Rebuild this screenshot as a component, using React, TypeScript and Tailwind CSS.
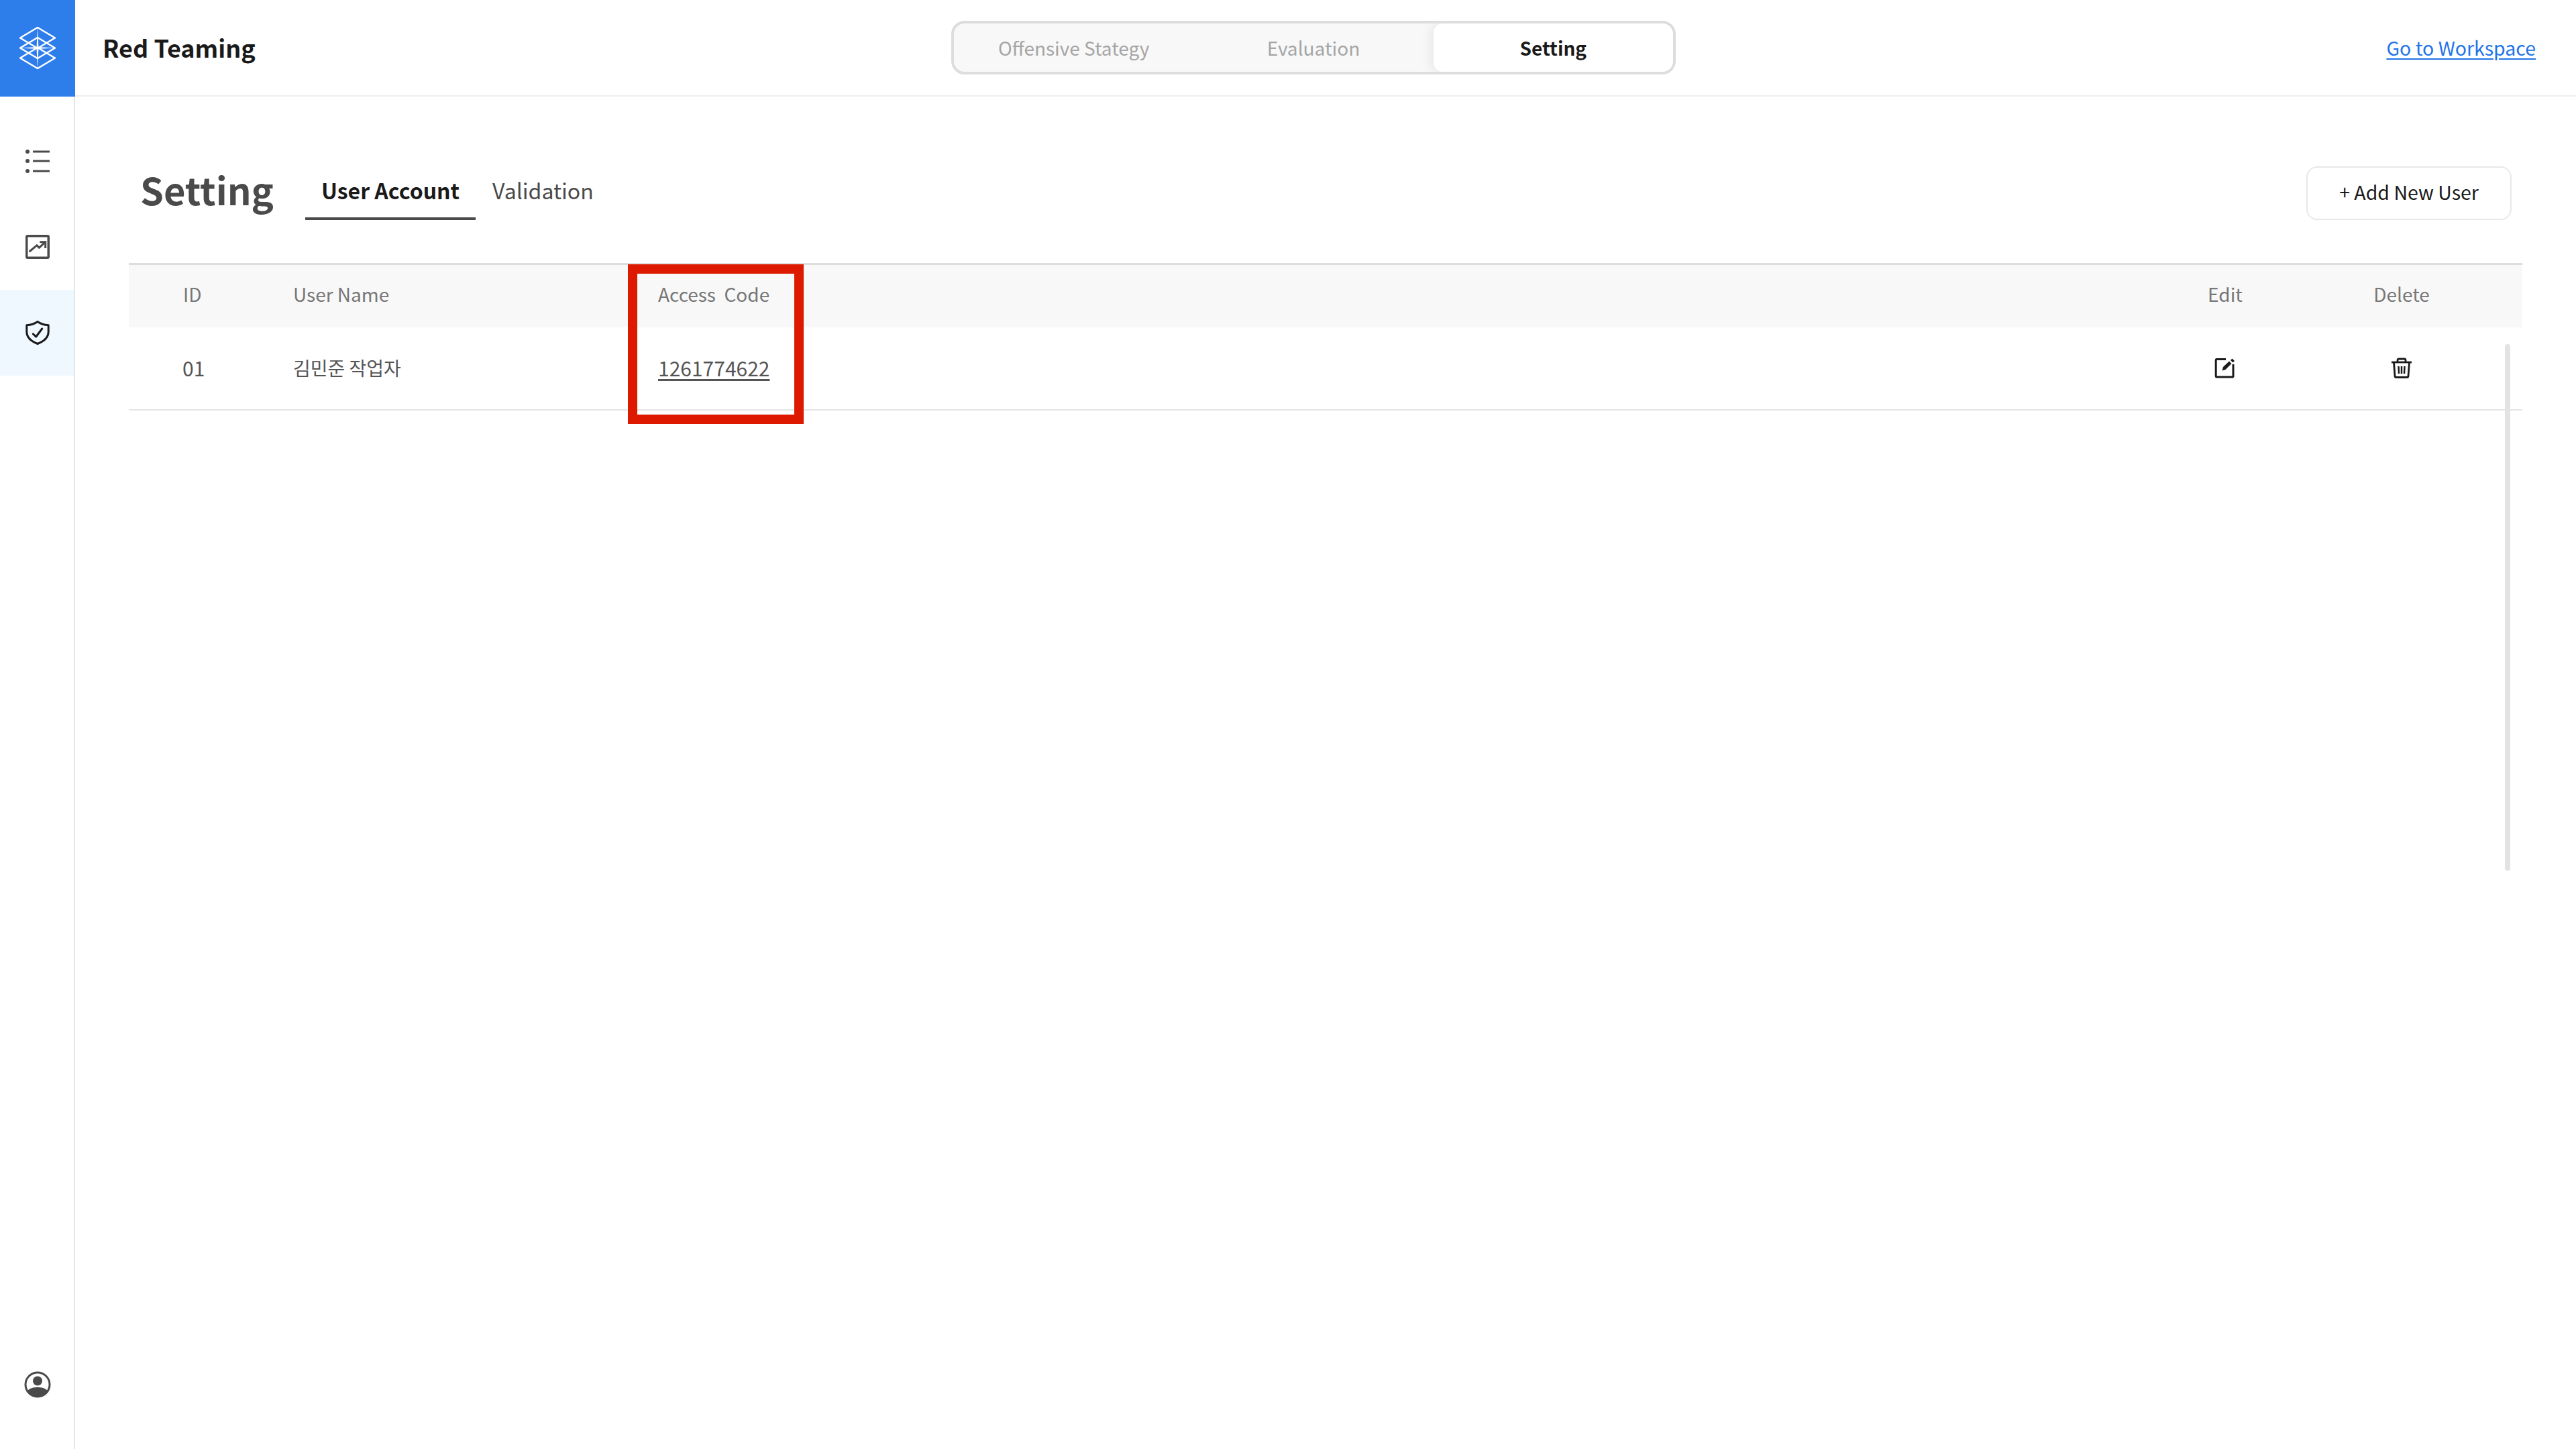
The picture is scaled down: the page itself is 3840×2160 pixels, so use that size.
const font = "font-['Noto_Sans_CJK_KR','Noto_Sans',sans-serif]"

const Logo = () => (
  <svg width="56" height="66" viewBox="0 0 56 66" fill="none" stroke="#fff" strokeWidth="2.5" strokeLinejoin="round">
    <path d="M28 2 54 17.500 28 33 2 17.500Z" />
    <path d="M28 17 54 32.500 28 48 2 32.500Z" />
    <path d="M28 32 54 47.500 28 63 2 47.500Z" />
    <path d="M28 2 29.500 32.500 28 63 26.500 32.500Z" fill="#fff" stroke="none" />
    <path d="M2 32.500 28 31 54 32.500 28 34Z" fill="#fff" stroke="none" />
  </svg>
)

const ListIcon = () => (
  <svg width="36" height="36" viewBox="0 0 36 36" fill="none" stroke="#4a4a4a" strokeWidth="3">
    <circle cx="3" cy="4" r="3" fill="#4a4a4a" stroke="none" />
    <circle cx="3" cy="18" r="3" fill="#4a4a4a" stroke="none" />
    <circle cx="3" cy="33" r="3" fill="#4a4a4a" stroke="none" />
    <path d="M11 4H36M11 18H36M11 33H36" />
  </svg>
)

const ChartIcon = () => (
  <svg width="36" height="36" viewBox="0 0 36 36" fill="none" stroke="#4a4a4a" strokeWidth="3.5">
    <rect x="1.75" y="1.75" width="32.5" height="32.5" rx="1.5" />
    <path d="M6.500 24.500 17 15.700 20.300 19.300 29.700 10.700" strokeLinecap="round" strokeLinejoin="round" strokeWidth="3" />
    <path d="M21.300 10.700H29.700V20" strokeWidth="3" />
  </svg>
)

const ShieldIcon = () => (
  <svg width="36" height="36" viewBox="0 0 36 36" fill="none" stroke="#1a1a1a" strokeWidth="3" strokeLinejoin="round">
    <path d="M18 1.500C13 5 7 6.500 1.800 6.800V17C1.800 25 9 31 18 34.500 27 31 34.200 25 34.200 17V6.800C29 6.500 23 5 18 1.500Z" />
    <path d="M11.300 19.700 15.700 24 24.700 12" strokeLinecap="round" />
  </svg>
)

const UserIcon = () => (
  <svg width="40" height="40" viewBox="0 0 40 40" fill="none">
    <circle cx="20" cy="20" r="18" stroke="#4a4a4a" strokeWidth="3" />
    <circle cx="20" cy="14.5" r="7" fill="#4a4a4a" />
    <path d="M5 29C9 25 14 24 20 24 26 24 31 25 35 29 32 35 26 38.500 20 38.500 14 38.500 8 35 5 29Z" fill="#4a4a4a" />
  </svg>
)

const EditIcon = () => (
  <svg width="32" height="32" viewBox="0 0 32 32" fill="none" stroke="#1a1a1a" strokeWidth="3">
    <path d="M17 2.500H3.500Q2.200 2.500 2.200 3.800V27.700Q2.200 29 3.500 29H26.700Q28 29 28 27.700V10" />
    <path d="M11.500 19.500 13 14 22 5.500 25.500 9 16.500 18Z" fill="#1a1a1a" stroke="none" />
    <path d="M24 4 26.500 1.500 30 5 27.500 7.500Z" fill="#1a1a1a" stroke="none" />
  </svg>
)

const TrashIcon = () => (
  <svg width="32" height="32" viewBox="0 0 32 32" fill="none" stroke="#1a1a1a" strokeWidth="2.800">
    <path d="M1 7H31" />
    <path d="M10 6.500V4Q10 2 12 2H20Q22 2 22 4V6.500" />
    <path d="M4.500 7 6 27.500Q6.200 29.500 8.200 29.500H23.800Q25.800 29.500 26 27.500L27.500 7" />
    <path d="M11.500 13 12 24M16 13V24M20.500 13 20 24" strokeWidth="2.500" />
  </svg>
)

const navItems = [
  { icon: <ListIcon />, active: false },
  { icon: <ChartIcon />, active: false },
  { icon: <ShieldIcon />, active: true },
]

export default function App() {
  return (
    <div className={`${font} flex h-[2160px] w-[3840px] flex-col bg-white`}>
      <header className="flex h-[144px] items-stretch border-b-2 border-[#eeeeee]">
        <div className="-mb-[2px] flex w-[112px] items-center justify-center bg-[#2d7deb]">
          <Logo />
        </div>
        <div className="flex flex-1 items-center pl-[41px] pr-[60px]">
          <h1 className="w-[1265px] pb-[3px] text-[36px] font-bold text-[#1a1a1a]">Red Teaming</h1>
          <div className="flex h-[80px] w-[1080px] overflow-hidden rounded-[20px] border-4 border-[#dddddd] bg-[#f8f8f8] text-[28px] text-[#a5a5a5]">
            <div className="flex flex-1 items-center justify-center">Offensive Stategy</div>
            <div className="flex flex-1 items-center justify-center">Evaluation</div>
            <div className="flex flex-1 items-center justify-center rounded-[14px] bg-white font-bold text-[#1a1a1a] shadow-[-8px_0_14px_rgba(0,0,0,0.05)]">
              Setting
            </div>
          </div>
          <a className="ml-auto text-[28.5px] text-[#1f74e8] underline underline-offset-4">Go to Workspace</a>
        </div>
      </header>

      <div className="flex flex-1">
        <aside className="flex w-[112px] flex-col border-r-2 border-[#e5e5e5] pt-[32px] pb-[56px]">
          {navItems.map((item, i) => (
            <div key={i} className={`flex h-[128px] items-center justify-center pl-[2px] ${item.active ? 'bg-[#f0f8ff]' : ''}`}>
              {item.icon}
            </div>
          ))}
          <div className="mt-auto flex h-[80px] items-center justify-center pl-[2px]">
            <UserIcon />
          </div>
        </aside>

        <main className="flex-1 pt-[102px] pr-[80px] pl-[80px]">
          <div className="flex h-[146px] items-start justify-between pr-[16px] pl-[17px]">
            <div className="flex items-start">
              <h2 className="mr-[47px] h-[76px] pb-[4px] text-[56px] leading-[72px] font-bold text-[#4a4a4a]">Setting</h2>
              <div className="flex h-[82px] items-center border-b-4 border-[#4a4a4a] px-[24px] pb-[4px] text-[32px] font-bold text-[#1a1a1a]">User Account</div>
              <div className="flex h-[82px] items-center px-[25px] pb-[8px] text-[32px] text-[#4a4a4a]">Validation</div>
            </div>
            <button className="mt-[2px] h-[80px] w-[306px] rounded-[16px] border-2 border-[#e8e8e8] pb-[3px] text-[28.5px] text-[#1a1a1a]">+ Add New User</button>
          </div>

          <div className="relative">
            <div className="grid h-[96px] grid-cols-[245px_544px_1fr_166px_360px] items-center border-t-[3px] border-[#dddddd] bg-[#f8f8f8] pb-[7px] text-[28px] text-[#777777]">
              <div className="pl-[81px]">ID</div>
              <div>User Name</div>
              <div className="whitespace-pre">Access  Code</div>
              <div className="text-center">Edit</div>
              <div className="text-center">Delete</div>
            </div>
            <div className="grid h-[124px] grid-cols-[245px_544px_1fr_166px_360px] items-center border-b-2 border-[#e5e5e5] text-[28px] text-[#555555]">
              <div className="pb-[2px] pl-[80px] text-[30px]">01</div>
              <div className="pb-[2px]">김민준 작업자</div>
              <div className="pb-[2px] text-[30px] underline underline-offset-4">1261774622</div>
              <div className="flex justify-center"><EditIcon /></div>
              <div className="flex justify-center"><TrashIcon /></div>
            </div>

            {/* highlight around the access code column */}
            <div className="absolute top-[2px] left-[744px] h-[238px] w-[262px] border-[14px] border-[#dd1a00]" />
            {/* scrollbar */}
            <div className="absolute top-[121px] right-[18px] h-[785px] w-[8px] rounded-full bg-[#e3e3e3]" />
          </div>
        </main>
      </div>
    </div>
  )
}
